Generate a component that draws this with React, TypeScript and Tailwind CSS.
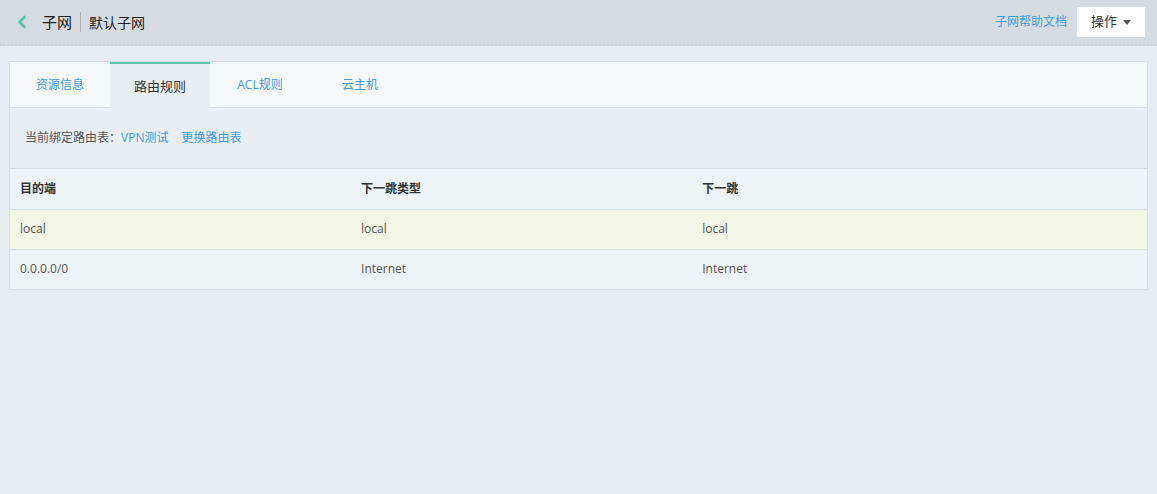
import { ChevronLeft } from 'lucide-react'

const rows = [
  { dest: 'local', type: 'local', next: 'local', hl: true },
  { dest: '0.0.0.0/0', type: 'Internet', next: 'Internet', hl: false },
]

const tabs = ['资源信息', '路由规则', 'ACL规则', '云主机']

export default function App() {
  return (
    <div
      className="min-h-[494px] bg-[#e7ecf0] text-[#333]"
      style={{ fontFamily: '"Open Sans", "Noto Sans CJK SC", sans-serif' }}
    >
      <header className="h-[46px] bg-[#d5dbe0] border-b-2 border-dotted border-[#c9d0d6] flex items-center pl-[12px] pr-[12px]">
        <ChevronLeft className="w-[20px] h-[20px] text-[#4cc9a6]" strokeWidth={3.2} />
        <span className="ml-[10px] text-[15px] text-[#222]">子网</span>
        <span className="mx-[8px] w-px h-[20px] bg-[#aab2b8]" />
        <span className="text-[14px] text-[#222]">默认子网</span>
        <div className="ml-auto flex items-center gap-[10px]">
          <a className="text-[12px] text-[#3d9be0]">子网帮助文档</a>
          <button className="h-[30px] w-[68px] bg-white text-[13px] text-[#333] flex items-center justify-center gap-[6px]">
            操作
            <span className="border-x-[4px] border-x-transparent border-t-[5px] border-t-[#555]" />
          </button>
        </div>
      </header>

      <div className="mx-[9px] mt-[15px] border border-[#d6dde3] bg-[#e9eef2]">
        <div className="flex h-[46px] bg-[#f6f9f9] border-b border-[#d6dde3]">
          {tabs.map((t, i) =>
            i === 1 ? (
              <div
                key={t}
                className="w-[100px] h-[47px] -mb-px border-t-2 border-[#5fc9b0] bg-[#e9eef2] flex items-center justify-center text-[13px] text-[#333]"
              >
                {t}
              </div>
            ) : (
              <div key={t} className="w-[100px] flex items-center justify-center text-[12px] text-[#3d9be0]">
                {t}
              </div>
            )
          )}
        </div>

        <div className="h-[61px] flex items-center pl-[15px] text-[12px] text-[#555] border-b border-[#d6dde3]">
          当前绑定路由表：<a className="text-[#3d9be0]">VPN测试</a>
          <a className="ml-[13px] text-[#3d9be0]">更换路由表</a>
        </div>

        <table className="w-full text-[12px] border-collapse">
          <thead>
            <tr className="h-[40px] bg-[#eef3f6] border-b border-[#d6dde3]">
              <th className="w-[30%] text-left font-bold pl-[10px] text-[#333]">目的端</th>
              <th className="w-[30%] text-left font-bold pl-[10px] text-[#333]">下一跳类型</th>
              <th className="w-[30%] text-left font-bold pl-[10px] text-[#333]">下一跳</th>
              <th />
            </tr>
          </thead>
          <tbody>
            {rows.map((r) => (
              <tr
                key={r.dest}
                className={`h-[40px] border-b border-[#d6dde3] last:border-b-0 text-[#555] ${r.hl ? 'bg-[#f3f5e6]' : 'bg-[#eef3f6]'}`}
              >
                <td className="pl-[10px]">{r.dest}</td>
                <td className="pl-[10px]">{r.type}</td>
                <td className="pl-[10px]">{r.next}</td>
                <td />
              </tr>
            ))}
          </tbody>
        </table>
      </div>
    </div>
  )
}
